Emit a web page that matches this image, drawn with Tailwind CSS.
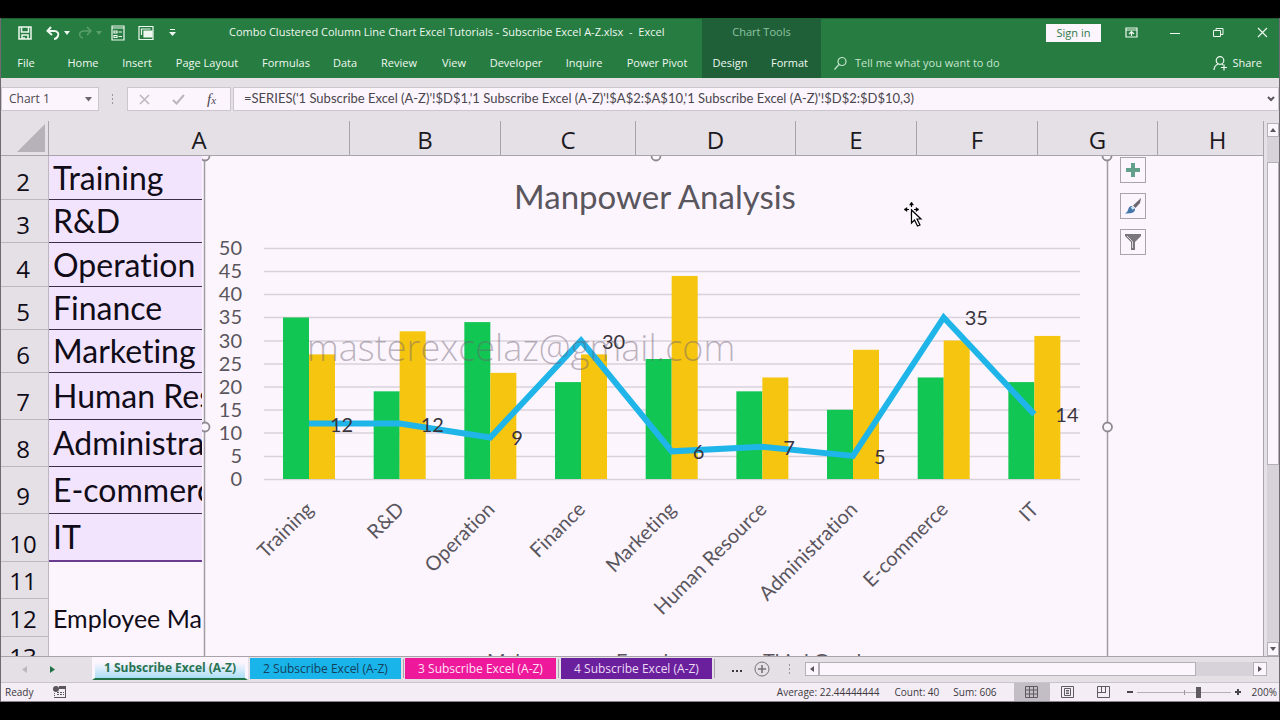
<!DOCTYPE html>
<html lang="en">
<head>
<meta charset="utf-8">
<title>Combo Clustered Column Line Chart - Excel</title>
<script src="https://cdn.jsdelivr.net/npm/@tailwindcss/browser@4"></script>
</head>
<body class="flex h-screen flex-col overflow-hidden bg-black py-[18px] font-['Open_Sans',sans-serif] text-[11px] text-[#3c383e]">
<div class="flex min-h-0 flex-1 flex-col border-x border-[#6f6a72] bg-[#e5dfe6]">

  <header class="flex h-[60px] shrink-0 border-t border-[#1c5f31] bg-[#277c41] text-[#eef8f0]">
    <div class="flex w-[701px] shrink-0 flex-col">
      <div class="flex h-[27px] items-center">
        <div class="flex w-[198px] shrink-0 items-center pl-[16px]">
          <button aria-label="Save" class="mr-[12px]"><svg width="16" height="16" viewBox="0 0 16 16" fill="none" stroke="currentColor" stroke-width="1.5"><path d="M2 2h12v12H2zM4.500 2v5h7V2M5 14v-4h6v4M7 12v2"/></svg></button>
          <button aria-label="Undo"><svg width="16" height="16" viewBox="0 0 16 16" fill="none" stroke="currentColor" stroke-width="2"><path d="M6 2L2.500 6 7 10M3 6h6c4 0 5 3 4 5s-3 3-4 3"/></svg></button>
          <svg class="mx-[3px]" width="6" height="4" viewBox="0 0 6 4" fill="currentColor"><path d="M0 0h6L3 4z"/></svg>
          <button aria-label="Redo" class="ml-[4px] text-[#5b9f6d]"><svg width="16" height="16" viewBox="0 0 16 16" fill="none" stroke="currentColor" stroke-width="1.500"><path d="M10 2l4 4-4 4M13 6H7C3 6 2 9 3 11s2 2 3 2"/></svg></button>
          <svg class="mx-[3px] text-[#5b9f6d]" width="6" height="4" viewBox="0 0 6 4" fill="currentColor"><path d="M0 0h6L3 4z"/></svg>
          <button aria-label="Form" class="ml-[5px]"><svg width="16" height="16" viewBox="0 0 16 16" fill="none" stroke="currentColor" stroke-width="1.200"><path d="M2 1h12v14H2zM2 3h12M4 6h3v2H4zM4 10.500h3v2H4zM8.500 7H12M8.500 11.500H12"/></svg></button>
          <button aria-label="Camera" class="ml-[12px]"><svg width="16" height="16" viewBox="0 0 16 16" fill="none" stroke="currentColor" stroke-width="1.200"><path d="M1 1.500h14v13H1zM3.500 10V4h9"/><path d="M6 6h8v6H6z" fill="currentColor"/></svg></button>
          <button aria-label="Customize quick access" class="ml-[15px]"><svg width="7" height="8" viewBox="0 0 7 8" fill="currentColor"><path d="M1 0h5v1H1zM0 3h7L3.500 7z"/></svg></button>
        </div>
        <h1 class="min-w-0 flex-1 pl-[30px] text-[11px] whitespace-pre">Combo Clustered Column Line Chart Excel Tutorials - Subscribe Excel A-Z.xlsx  -  Excel</h1>
      </div>
      <nav class="flex h-[32px] items-center pt-[2px] text-[11px]">
        <a href="#" class="w-[50px] text-center">File</a>
        <a href="#" class="w-[64px] text-center">Home</a>
        <a href="#" class="w-[44px] text-center">Insert</a>
        <a href="#" class="w-[96px] text-center">Page Layout</a>
        <a href="#" class="w-[62px] text-center">Formulas</a>
        <a href="#" class="w-[56px] text-center">Data</a>
        <a href="#" class="w-[52px] text-center">Review</a>
        <a href="#" class="w-[58px] text-center">View</a>
        <a href="#" class="w-[66px] text-center">Developer</a>
        <a href="#" class="w-[70px] text-center">Inquire</a>
        <a href="#" class="w-[76px] text-center">Power Pivot</a>
      </nav>
    </div>
    <div class="flex w-[119px] shrink-0 flex-col bg-[#1f6039]">
      <div class="flex h-[27px] items-center justify-center text-[#8fc4a2]">Chart Tools</div>
      <nav class="flex h-[32px] items-center pt-[2px]">
        <a href="#" class="w-[56px] text-center">Design</a>
        <a href="#" class="w-[63px] text-center">Format</a>
      </nav>
    </div>
    <div class="flex min-w-0 flex-1 flex-col">
      <div class="flex h-[27px] items-center justify-end">
        <button class="mr-[24px] h-[18px] w-[55px] bg-[#fcf5fd] leading-[18px] text-[#2c7a48]">Sign in</button>
        <button aria-label="Ribbon display options" class="mr-[32px]"><svg width="13" height="11" viewBox="0 0 13 11" fill="none" stroke="currentColor" stroke-width="1.200"><path d="M1 1h11v9H1zM1 3h11M6.500 9V5M4 7l2.500-2.500L9 7"/></svg></button>
        <button aria-label="Minimize" class="mr-[33px]"><svg width="10" height="10" viewBox="0 0 10 10" stroke="currentColor"><path d="M0 5.500h10"/></svg></button>
        <button aria-label="Restore" class="mr-[33px]"><svg width="11" height="11" viewBox="0 0 11 11" fill="none" stroke="currentColor"><path d="M.5 3.500h7v6h-7zM3 3V1.500h7v6H8"/></svg></button>
        <button aria-label="Close" class="mr-[11px]"><svg width="11" height="11" viewBox="0 0 11 11" stroke="currentColor" stroke-width="1.200"><path d="M1 1l9 9M10 1l-9 9"/></svg></button>
      </div>
      <div class="flex h-[32px] items-center pt-[2px] pl-[12px]">
        <svg class="text-[#c5e4cd]" width="15" height="15" viewBox="0 0 15 15" fill="none" stroke="currentColor" stroke-width="1.200"><circle cx="9" cy="5.500" r="4"/><path d="M6 8.500L1.500 13.500"/></svg>
        <span class="ml-[7px] flex-1 text-[#c5e4cd]">Tell me what you want to do</span>
        <button class="mr-[17px] flex items-center gap-[4px]"><svg width="15" height="15" viewBox="0 0 15 15" fill="none" stroke="currentColor" stroke-width="1.200"><circle cx="7" cy="4.500" r="3.800"/><path d="M1 14c0-3 2-5 4-6M9 8l1 1M11 8.500v6M8 11.500h6"/></svg>Share</button>
      </div>
    </div>
  </header>

  <div class="flex h-[43px] shrink-0 items-start pt-[9px]">
    <div class="flex h-[24px] w-[98px] items-center justify-between border border-[#cbc5cd] bg-[#fcf5fd] pr-[6px] pl-[7px] text-[12px] text-[#4a464d]">
      <span>Chart 1</span>
      <svg width="7" height="5" viewBox="0 0 7 5" fill="#6b666e"><path d="M0 0h7L3.500 4.500z"/></svg>
    </div>
    <svg class="mx-[12px] mt-[7px]" width="4" height="11" viewBox="0 0 4 11" fill="#9b959e"><path d="M1 0h1v2H1zM1 4h1v2H1zM1 8h1v2H1z"/></svg>
    <div class="flex h-[24px] w-[104px] items-center border border-[#cbc5cd] bg-[#fcf5fd] pl-[11px]">
      <button aria-label="Cancel"><svg width="11" height="11" viewBox="0 0 11 11" stroke="#bbb5be" stroke-width="1.500"><path d="M1 1l9 9M10 1l-9 9"/></svg></button>
      <button aria-label="Enter" class="ml-[22px]"><svg width="13" height="11" viewBox="0 0 13 11" fill="none" stroke="#bbb5be" stroke-width="2"><path d="M1 6l3.500 3.500L12 1"/></svg></button>
      <button aria-label="Insert function" class="ml-[22px] font-['Liberation_Serif',serif] text-[15px] leading-[16px] text-[#4a464d] italic">f<span class="text-[11px]">x</span></button>
    </div>
    <div class="ml-[2px] flex h-[24px] min-w-0 flex-1 items-center border border-[#cbc5cd] bg-[#fcf5fd] pr-[3px] pl-[10px]">
      <input aria-label="Formula bar" class="min-w-0 flex-1 bg-transparent font-['Lato',sans-serif] text-[13px] text-[#4a464d] outline-none" value="=SERIES('1 Subscribe Excel (A-Z)'!$D$1,'1 Subscribe Excel (A-Z)'!$A$2:$A$10,'1 Subscribe Excel (A-Z)'!$D$2:$D$10,3)">
      <svg width="8" height="6" viewBox="0 0 8 6" fill="none" stroke="#5a565d" stroke-width="2"><path d="M1 1l3 3 3-3"/></svg>
    </div>
  </div>

  <main class="relative flex min-h-0 flex-1 overflow-hidden">
    <div class="min-w-0 flex-1 overflow-hidden border-r border-[#a9a3ac] bg-[#fcf5fd]">
      <table class="w-[1264px] table-fixed border-separate border-spacing-0">
        <colgroup><col class="w-[48px]"><col class="w-[301px]"><col class="w-[151px]"><col class="w-[135px]"><col class="w-[160px]"><col class="w-[121px]"><col class="w-[121px]"><col class="w-[120px]"><col></colgroup>
        <thead class="bg-[#e5dfe6] text-[24px] leading-[30px] text-[#1c1a1e]">
          <tr class="h-[35px]">
            <th class="border-r border-b border-[#a9a3ac] p-0"><svg class="ml-[16px]" width="28" height="28" viewBox="0 0 28 28" fill="#b7b1b9"><path d="M28 0v28H0z"/></svg></th>
            <th class="border-r border-b border-[#a9a3ac] p-0 pt-[3px] font-normal">A</th>
            <th class="border-r border-b border-[#a9a3ac] p-0 pt-[3px] font-normal">B</th>
            <th class="border-r border-b border-[#a9a3ac] p-0 pt-[3px] font-normal">C</th>
            <th class="border-r border-b border-[#a9a3ac] p-0 pt-[3px] font-normal">D</th>
            <th class="border-r border-b border-[#a9a3ac] p-0 pt-[3px] font-normal">E</th>
            <th class="border-r border-b border-[#a9a3ac] p-0 pt-[3px] font-normal">F</th>
            <th class="border-r border-b border-[#a9a3ac] p-0 pt-[3px] font-normal">G</th>
            <th class="border-b border-[#a9a3ac] p-0 pt-[3px] pl-[12px] font-normal">H</th>
          </tr>
        </thead>
        <tbody class="font-['Lato',sans-serif] text-[32px] leading-[36px] text-[#100c18] [font-variant-ligatures:none]">
          <tr class="h-[44px]"><th class="border-r border-b border-[#bdb7c0] bg-[#e5dfe6] p-0 pt-[8px] pr-[3px] font-['Open_Sans',sans-serif] text-[24px] leading-[30px] font-normal">2</th><td class="border-b border-[#3a3046] bg-[#f3e4fd] p-0 pl-[4px]">Training</td></tr>
          <tr class="h-[43px]"><th class="border-r border-b border-[#bdb7c0] bg-[#e5dfe6] p-0 pt-[8px] pr-[3px] font-['Open_Sans',sans-serif] text-[24px] leading-[30px] font-normal">3</th><td class="border-b border-[#3a3046] bg-[#f3e4fd] p-0 pl-[4px]">R&amp;D</td></tr>
          <tr class="h-[44px]"><th class="border-r border-b border-[#bdb7c0] bg-[#e5dfe6] p-0 pt-[8px] pr-[3px] font-['Open_Sans',sans-serif] text-[24px] leading-[30px] font-normal">4</th><td class="border-b border-[#3a3046] bg-[#f3e4fd] p-0 pl-[4px]">Operation</td></tr>
          <tr class="h-[43px]"><th class="border-r border-b border-[#bdb7c0] bg-[#e5dfe6] p-0 pt-[8px] pr-[3px] font-['Open_Sans',sans-serif] text-[24px] leading-[30px] font-normal">5</th><td class="border-b border-[#3a3046] bg-[#f3e4fd] p-0 pl-[4px]">Finance</td></tr>
          <tr class="h-[43px]"><th class="border-r border-b border-[#bdb7c0] bg-[#e5dfe6] p-0 pt-[8px] pr-[3px] font-['Open_Sans',sans-serif] text-[24px] leading-[30px] font-normal">6</th><td class="border-b border-[#3a3046] bg-[#f3e4fd] p-0 pl-[4px]">Marketing</td></tr>
          <tr class="h-[47px]"><th class="border-r border-b border-[#bdb7c0] bg-[#e5dfe6] p-0 pt-[12px] pr-[3px] font-['Open_Sans',sans-serif] text-[24px] leading-[30px] font-normal">7</th><td class="border-b border-[#3a3046] bg-[#f3e4fd] p-0 pl-[4px] whitespace-nowrap">Human Resource</td></tr>
          <tr class="h-[47px]"><th class="border-r border-b border-[#bdb7c0] bg-[#e5dfe6] p-0 pt-[12px] pr-[3px] font-['Open_Sans',sans-serif] text-[24px] leading-[30px] font-normal">8</th><td class="border-b border-[#3a3046] bg-[#f3e4fd] p-0 pl-[4px]">Administration</td></tr>
          <tr class="h-[47px]"><th class="border-r border-b border-[#bdb7c0] bg-[#e5dfe6] p-0 pt-[12px] pr-[3px] font-['Open_Sans',sans-serif] text-[24px] leading-[30px] font-normal">9</th><td class="border-b border-[#3a3046] bg-[#f3e4fd] p-0 pl-[4px]">E-commerce</td></tr>
          <tr class="h-[48px]"><th class="border-r border-b border-[#bdb7c0] bg-[#e5dfe6] p-0 pt-[12px] pr-[3px] font-['Open_Sans',sans-serif] text-[24px] leading-[30px] font-normal">10</th><td class="border-b-2 border-[#6a3d90] bg-[#f3e4fd] p-0 pl-[4px]">IT</td></tr>
          <tr class="h-[37px]"><th class="border-r border-b border-[#bdb7c0] bg-[#e5dfe6] p-0 pt-[2px] pr-[3px] font-['Open_Sans',sans-serif] text-[24px] leading-[30px] font-normal">11</th><td></td></tr>
          <tr class="h-[38px]"><th class="border-r border-b border-[#bdb7c0] bg-[#e5dfe6] p-0 pt-[2px] pr-[3px] font-['Open_Sans',sans-serif] text-[24px] leading-[30px] font-normal">12</th><td class="p-0 pl-[4px] text-[25px] leading-[30px] whitespace-nowrap">Employee Manpower</td></tr>
          <tr class="h-[38px]"><th class="border-r border-b border-[#bdb7c0] bg-[#e5dfe6] p-0 pt-[2px] pr-[3px] font-['Open_Sans',sans-serif] text-[24px] leading-[30px] font-normal">13</th><td></td></tr>
        </tbody>
      </table>
    </div>

    <!-- Vertical scroll bar -->
    <div class="flex w-[15px] shrink-0 flex-col pt-[2px] pl-[3px]">
      <button aria-label="Scroll up" class="flex h-[14px] items-center justify-center border border-[#b5afb8] bg-[#fcf5fd]"><svg width="6" height="4" viewBox="0 0 6 4" fill="#5a565d"><path d="M0 4h6L3 0z"/></svg></button>
      <div class="h-[25px] bg-[#d7d1d9]"></div>
      <div class="min-h-0 flex-1 bg-[#d7d1d9]"><div class="h-[303px] border border-[#b5afb8] bg-[#fcf5fd]"></div></div>
      <button aria-label="Scroll down" class="flex h-[14px] items-center justify-center border border-[#b5afb8] bg-[#fcf5fd]"><svg width="6" height="4" viewBox="0 0 6 4" fill="#5a565d"><path d="M0 0h6L3 4z"/></svg></button>
    </div>

    <!-- Chart object floating over the cells -->
    <div class="absolute top-[35px] bottom-0 left-[201px] w-[912px] overflow-hidden">
      <svg class="block font-['Lato',sans-serif] [font-variant-ligatures:none]" width="912" height="504" viewBox="202 156 912 504" fill="#5a565d">
        <rect x="202" y="156" width="906" height="504" fill="#fcf5fd"/>
        <path d="M204.500 156v504M1107.500 156v504" stroke="#a29da5" stroke-width="1.500"/>
        <text x="655" y="209" text-anchor="middle" font-size="33">Manpower Analysis</text>
        <path stroke="#d9d2db" stroke-width="1.500" d="M264 248.500H1080M264 271.500H1080M264 294.500H1080M264 317.500H1080M264 341H1080M264 364H1080M264 387H1080M264 410H1080M264 433H1080M264 456.500H1080M264 479.500H1080"/>
        <g id="axis" font-size="20" text-anchor="end"></g>
        <g id="bars"></g>
        <polyline id="line" fill="none" stroke="#1fb5e8" stroke-width="6"/>
        <g id="labels" font-size="20" fill="#38343b"></g>
        <g id="cats" font-size="20" text-anchor="end"></g>
        <g font-size="20"><text x="487" y="668">Male</text><text x="616" y="668">Female</text><text x="763" y="668">Third Gender</text></g>
        <g fill="#fcf5fd" stroke="#8f8a92" stroke-width="1.800"><circle cx="205" cy="156" r="4.500"/><circle cx="656" cy="156" r="4.500"/><circle cx="1107" cy="156" r="4.500"/><circle cx="205" cy="427" r="4.500"/><circle cx="1107.500" cy="427" r="4.500"/></g>
        <text x="307" y="361" font-size="36" font-family="Open Sans" font-weight="300" fill="#6b6070" fill-opacity=".45">masterexcelaz@gmail.com</text>
        <g stroke="#000" stroke-width="1.200"><path d="M911.500 203v13M905 209.500h13" stroke-dasharray="4 5"/><path d="M911.500 202l-2 3h4zM904 209.500l3-2v4zM919 209.500l-3-2v4z" fill="#000" stroke-width=".5"/><path d="M911.500 210v13l3-3 3 6 2.500-1-3-6h4z" fill="#fff"/></g>
      </svg>
    </div>
    <div class="absolute top-[36px] left-[1119px] flex flex-col gap-[10px]">
      <button aria-label="Chart elements" class="flex h-[26px] w-[26px] items-center justify-center border border-[#a9a3ac] bg-[#fcf5fd]"><svg width="14" height="14" viewBox="0 0 14 14" stroke="#63a08c" stroke-width="4"><path d="M7 0v14M0 7h14"/></svg></button>
      <button aria-label="Chart styles" class="flex h-[26px] w-[26px] items-center justify-center border border-[#a9a3ac] bg-[#fcf5fd]"><svg width="18" height="18" viewBox="0 0 18 18"><path d="M17 1l-1 5-4.500 5L9 8.500z" fill="#6d6870"/><path d="M8 9l3 3c0 4-4 4.500-10 4.500 2-1 3-3 3.500-5C5 9.500 7 9 8 9z" fill="#4577ab"/><path d="M7.500 10l2 2" stroke="#dcebf7" stroke-width="2"/></svg></button>
      <button aria-label="Chart filters" class="flex h-[26px] w-[26px] items-center justify-center border border-[#a9a3ac] bg-[#fcf5fd]"><svg width="18" height="18" viewBox="0 0 18 18" fill="#7b757e"><path d="M1 1h16v2l-6 6v8H7V9L1 3z"/><path d="M3 3l5.500 5.500V15" fill="none" stroke="#d8d2da"/></svg></button>
    </div>
  </main>

  <!-- Sheet tabs and horizontal scroll bar -->
  <div class="flex h-[26px] shrink-0 items-start border-t border-[#a9a3ac]">
    <div class="flex h-[24px] w-[91px] shrink-0 items-center pl-[21px]">
      <button aria-label="Previous sheet"><svg width="5" height="7" viewBox="0 0 5 7" fill="#bdb7c0"><path d="M5 0v7L0 3.500z"/></svg></button>
      <button aria-label="Next sheet" class="ml-[23px]"><svg width="5" height="7" viewBox="0 0 5 7" fill="#217346"><path d="M0 0v7l5-3.500z"/></svg></button>
    </div>
    <button class="h-[23px] w-[156px] shrink-0 border-x-3 border-b-2 border-x-[#fcf5fd] border-b-[#217346] bg-linear-to-b from-[#fcf5fd] from-25% to-[#a9def7] text-[12px] font-bold whitespace-nowrap text-[#2a7350]">1 Subscribe Excel (A-Z)</button>
    <button class="mt-[1px] ml-[2px] h-[21px] w-[151px] shrink-0 bg-[#19b4ea] text-[12px] whitespace-nowrap text-[#16405c]">2 Subscribe Excel (A-Z)</button>
    <div class="mt-[2px] mr-[1px] ml-[2px] h-[19px] w-px bg-[#a9a3ac]"></div>
    <button class="mt-[1px] h-[21px] w-[151px] shrink-0 bg-[#ee189b] text-[12px] whitespace-nowrap text-[#fde3f4]">3 Subscribe Excel (A-Z)</button>
    <div class="mx-[2px] mt-[2px] h-[19px] w-px bg-[#a9a3ac]"></div>
    <button class="mt-[1px] h-[21px] w-[151px] shrink-0 bg-[#6a1f9c] text-[12px] whitespace-nowrap text-[#eadcf5]">4 Subscribe Excel (A-Z)</button>
    <div class="ml-[2px] mt-[2px] h-[19px] w-px bg-[#a9a3ac]"></div>
    <button aria-label="More sheets" class="ml-[17px] flex h-[24px] items-center pt-[4px]"><svg width="11" height="3" viewBox="0 0 11 3" fill="#3c383e"><path d="M0 0h2v2H0zM4 0h2v2H4zM8 0h2v2H8z"/></svg></button>
    <button aria-label="New sheet" class="ml-[11px] flex h-[24px] items-center"><svg width="16" height="16" viewBox="0 0 16 16" fill="none" stroke="#77717a"><circle cx="8" cy="8" r="7"/><path d="M8 4v8M4 8h8" stroke-width="1.600"/></svg></button>
    <svg class="mt-[7px] ml-[18px]" width="4" height="11" viewBox="0 0 4 11" fill="#9b959e"><path d="M1 0h1v2H1zM1 4h1v2H1zM1 8h1v2H1z"/></svg>
    <div class="mt-[5px] mr-[12px] ml-[13px] flex h-[14px] min-w-0 flex-1 bg-[#d7d1d9]">
      <button aria-label="Scroll left" class="flex w-[14px] items-center justify-center border border-[#b5afb8] bg-[#fcf5fd]"><svg width="4" height="6" viewBox="0 0 4 6" fill="#5a565d"><path d="M4 0v6L0 3z"/></svg></button>
      <div class="min-w-0 flex-1 border border-[#b5afb8] bg-[#fcf5fd]"></div>
      <div class="w-[57px]"></div>
      <button aria-label="Scroll right" class="flex w-[14px] items-center justify-center border border-[#b5afb8] bg-[#fcf5fd]"><svg width="4" height="6" viewBox="0 0 4 6" fill="#5a565d"><path d="M0 0v6l4-3z"/></svg></button>
    </div>
  </div>

  <footer class="flex h-[20px] shrink-0 items-center border-y border-t-[#c9c3cb] border-b-[#8a858d] bg-[#f4edf5] pl-[4px] text-[10px]">
    <span>Ready</span>
    <svg class="ml-[20px]" width="13" height="12" viewBox="0 0 13 12" fill="#5a565d"><circle cx="3" cy="3" r="3"/><path d="M6 0h7v3H6zM1 7h1v1H1zM1 9h1v1H1zM12 3h1v9H1v-1h11zM4 6h2v1H4zM7 6h2v1H7zM10 6h1v1h-1zM4 8h2v1H4zM7 8h2v1H7zM10 8h1v1h-1z"/></svg>
    <div class="flex flex-1 items-center justify-end">
      <span>Average: 22.44444444</span>
      <span class="ml-[15px]">Count: 40</span>
      <span class="ml-[14px]">Sum: 606</span>
    </div>
    <button aria-label="Normal view" class="ml-[17px] flex h-[18px] w-[36px] items-center justify-center bg-[#c3bdc5]"><svg width="13" height="12" viewBox="0 0 13 12" fill="none" stroke="#5f5a62"><path d="M.5.5h12v11H.5zM4.500 0v12M8.500 0v12M0 4h13M0 8h13"/></svg></button>
    <button aria-label="Page layout view" class="flex h-[18px] w-[36px] items-center justify-center"><svg width="13" height="12" viewBox="0 0 13 12" fill="none" stroke="#5f5a62"><path d="M.5.5h12v11H.5zM3.500 2.500h6v7h-6zM5 4.500h3M5 6h3M5 7.500h3"/></svg></button>
    <button aria-label="Page break preview" class="flex h-[18px] w-[36px] items-center justify-center"><svg width="13" height="12" viewBox="0 0 13 12" fill="none" stroke="#5f5a62"><path d="M.5.5h12v11H.5zM4.500 0v6.500M8.500 0v6.500M1 6.500h8"/></svg></button>
    <button aria-label="Zoom out" class="ml-[5px] flex"><svg width="6" height="6" viewBox="0 0 6 6" fill="#4a464d"><path d="M0 2h6v2H0z"/></svg></button>
    <label class="relative mx-[4px] flex h-[18px] w-[94px] items-center">
      <span class="absolute inset-x-0 top-[9px] h-px bg-[#b5afb8]"></span>
      <span class="absolute top-[7px] left-[47px] h-[5px] w-px bg-[#9b959e]"></span>
      <input type="range" aria-label="Zoom" min="0" max="100" value="67" class="relative h-[12px] w-full appearance-none bg-transparent [&::-webkit-slider-thumb]:h-[11px] [&::-webkit-slider-thumb]:w-[5px] [&::-webkit-slider-thumb]:appearance-none [&::-webkit-slider-thumb]:bg-[#5f5a62]">
    </label>
    <button aria-label="Zoom in" class="flex"><svg width="6" height="6" viewBox="0 0 6 6" fill="#4a464d"><path d="M0 2h6v2H0zM2 0h2v6H2z"/></svg></button>
    <span class="mr-[2px] ml-[11px] text-right">200%</span>
  </footer>
</div>

<script>
const cats = ["Training", "R&D", "Operation", "Finance", "Marketing", "Human Resource", "Administration", "E-commerce", "IT"];
const male = [35, 19, 34, 21, 26, 19, 15, 22, 21];
const female = [27, 32, 23, 27, 44, 22, 28, 30, 31];
const third = [12, 12, 9, 30, 6, 7, 5, 35, 14];
const NS = "http://www.w3.org/2000/svg";
const y = v => 479 - v * 4.615;
const cx = i => 309 + i * 90.67;
function add(id, tag, attrs, text) {
  const el = document.createElementNS(NS, tag);
  for (const k in attrs) el.setAttribute(k, attrs[k]);
  if (text !== undefined) el.textContent = text;
  document.getElementById(id).appendChild(el);
}
for (let v = 0; v <= 50; v += 5) add("axis", "text", { x: 242, y: y(v) + 7 }, v);
cats.forEach((c, i) => {
  const x = cx(i);
  add("bars", "rect", { x: x - 26, y: y(male[i]), width: 26, height: male[i] * 4.615, fill: "#12c653" });
  add("bars", "rect", { x: x, y: y(female[i]), width: 26, height: female[i] * 4.615, fill: "#f5c50f" });
  add("labels", "text", { x: x + 21, y: y(third[i]) + 8 }, third[i]);
  add("cats", "text", { transform: `translate(${x + 2} 507) rotate(-45)`, x: 0, y: 5 }, c);
});
document.getElementById("line").setAttribute("points", third.map((v, i) => cx(i) + "," + y(v)).join(" "));
</script>
</body>
</html>
